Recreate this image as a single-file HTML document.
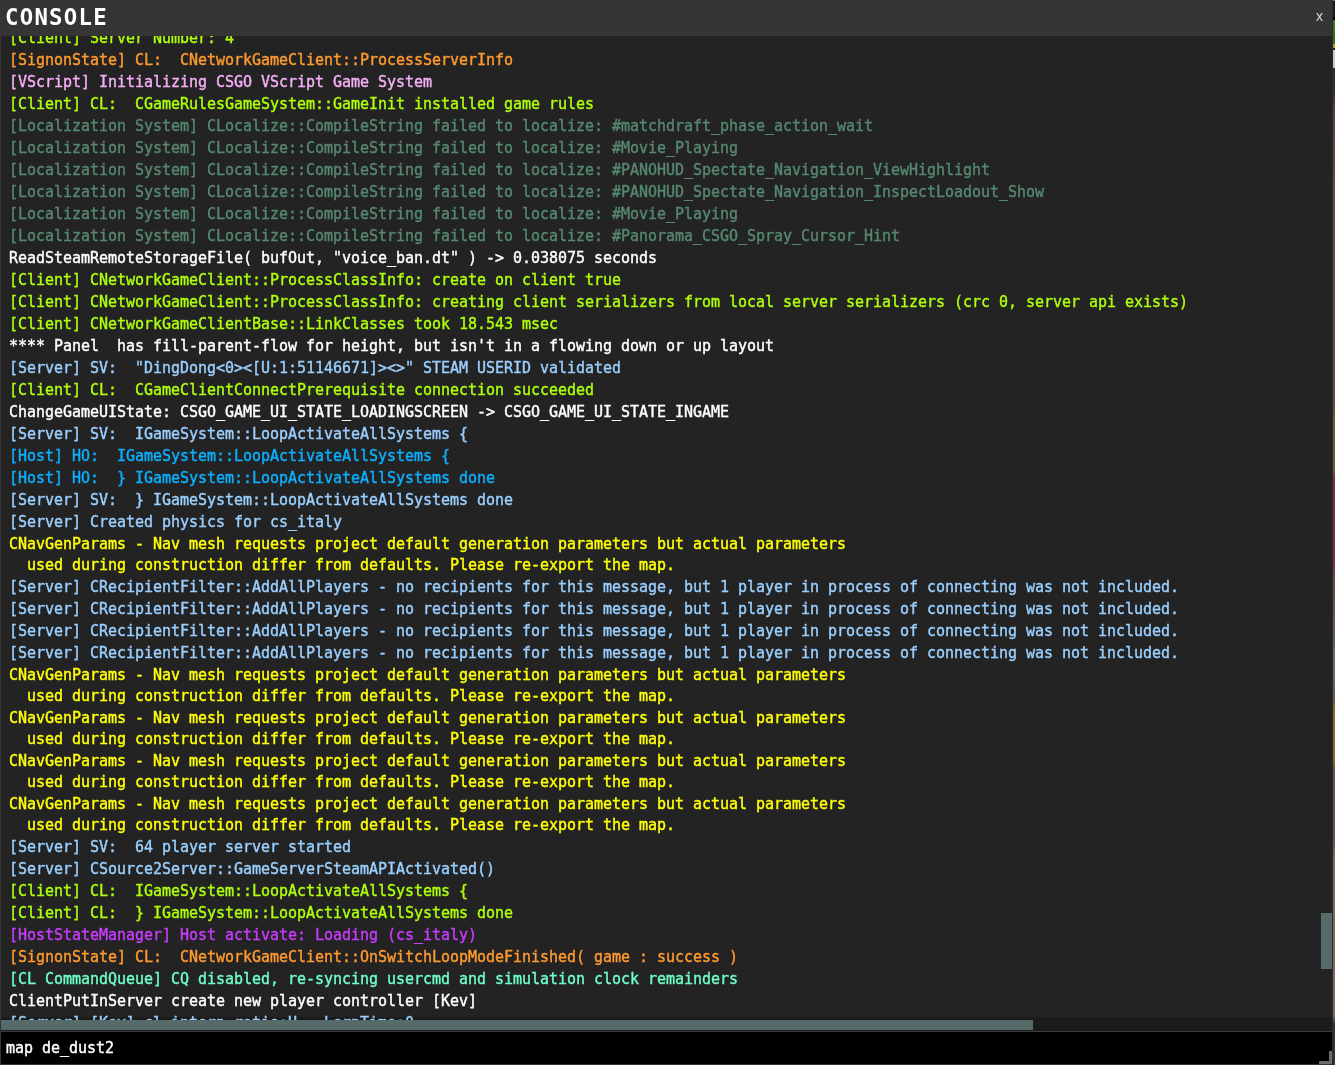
<!DOCTYPE html>
<html lang="en">
<head>
<meta charset="utf-8">
<title>Console</title>
<style>
html,body{margin:0;padding:0;}
body{width:1335px;height:1065px;overflow:hidden;position:relative;background:#5a4038;font-family:"DejaVu Sans Mono","Liberation Mono",monospace;}
.bg{position:absolute;left:1333px;top:0;width:2px;height:1065px;background:linear-gradient(to bottom,#4a9a2a 0,#4a9a2a 1px,#000 1px,#000 2px,#1c1c1c 2px,#1c1c1c 17px,#000 17px,#000 20px,#3a7a1e 20px,#2f6a1a 44px,#b0a020 44px,#b0a020 48px,#222 48px,#222 50px,#c8c8c8 50px,#c8c8c8 68px,#3a2a28 68px,#3a2a28 90px,#5a4038 110px,#6a4a3c 200px,#6a4a3c 400px,#6a5a30 420px,#6a5a30 470px,#7a3038 480px,#7a3038 560px,#6a4a40 580px,#6a5a50 640px,#6a6a70 660px,#6a5a50 700px,#8a6a20 710px,#8a6a20 760px,#6a5048 770px,#6a5048 840px,#80685a 860px,#80685a 1016px,#303040 1024px,#303040 1065px);}
.win{position:absolute;left:0;top:0;width:1332px;height:1065px;background:#353535;overflow:hidden;border-right:1px solid #2c2b2e;}
.hdr{position:absolute;left:0;top:0;width:1333px;height:36px;background:#353535;}
.title{position:absolute;left:5.4px;top:3px;will-change:transform;font-family:"DejaVu Sans Mono","Liberation Mono",monospace;font-weight:bold;font-size:22.3px;line-height:28px;letter-spacing:1.28px;color:#fff;white-space:nowrap;}
.close{will-change:transform;position:absolute;left:1316px;top:6px;font-family:"Liberation Sans",sans-serif;font-size:14px;line-height:20px;color:#dcdcdc;}
.log{position:absolute;left:1px;top:36px;width:1331px;height:995px;background:#232323;overflow:hidden;}
.inner{will-change:transform;position:absolute;left:8.3px;top:-7.9px;-webkit-text-stroke:0.4px currentColor;font-size:15px;letter-spacing:-0.031px;}
.clip{position:absolute;left:0;top:0;width:1331px;height:984px;overflow:hidden;}
.l{line-height:21px;margin-bottom:1px;white-space:pre;}
.cl{color:#aeff0c}.so{color:#ff9a2f}.vs{color:#f6aff6}.lo{color:#568870}.df{color:#fff}
.sv{color:#9acfff}.ho{color:#0cb0ff}.nv{color:#ffff0a}.hs{color:#c83cff}.cq{color:#6dffc8}
.htrack{position:absolute;left:0;top:981px;width:1331px;height:14px;background:rgba(20,20,20,.5);}
.hthumb{position:absolute;left:0;top:984px;width:1032px;height:10px;background:#566a69;}
.vthumb{position:absolute;left:1320px;top:877px;width:11px;height:56px;background:#566a69;}
.sep{position:absolute;left:1px;top:1031px;width:1331px;height:1px;background:#3c3c3c;}
.inp{position:absolute;left:1px;top:1032px;width:1331px;height:32px;background:#000;color:#fff;font-size:15px;letter-spacing:-0.031px;white-space:pre;}
.inp span{position:absolute;left:5px;top:6px;line-height:21px;will-change:transform;-webkit-text-stroke:0.4px currentColor;}
.grip{position:absolute;left:1319px;top:1051px;width:13px;height:13px;box-sizing:border-box;border-right:3px solid #6b6b6b;border-bottom:3px solid #6b6b6b;}
</style>
</head>
<body>
<div class="bg"></div>
<div class="win">
<div class="hdr"><div class="title">CONSOLE</div><div class="close">x</div></div>
<div class="log">
<div class="htrack"></div>
<div class="clip"><div class="inner">
<div class="l cl">[Client] Server Number: 4</div>
<div class="l so">[SignonState] CL:  CNetworkGameClient::ProcessServerInfo</div>
<div class="l vs">[VScript] Initializing CSGO VScript Game System</div>
<div class="l cl">[Client] CL:  CGameRulesGameSystem::GameInit installed game rules</div>
<div class="l lo">[Localization System] CLocalize::CompileString failed to localize: #matchdraft_phase_action_wait</div>
<div class="l lo">[Localization System] CLocalize::CompileString failed to localize: #Movie_Playing</div>
<div class="l lo">[Localization System] CLocalize::CompileString failed to localize: #PANOHUD_Spectate_Navigation_ViewHighlight</div>
<div class="l lo">[Localization System] CLocalize::CompileString failed to localize: #PANOHUD_Spectate_Navigation_InspectLoadout_Show</div>
<div class="l lo">[Localization System] CLocalize::CompileString failed to localize: #Movie_Playing</div>
<div class="l lo">[Localization System] CLocalize::CompileString failed to localize: #Panorama_CSGO_Spray_Cursor_Hint</div>
<div class="l df">ReadSteamRemoteStorageFile( bufOut, "voice_ban.dt" ) -&gt; 0.038075 seconds</div>
<div class="l cl">[Client] CNetworkGameClient::ProcessClassInfo: create on client true</div>
<div class="l cl">[Client] CNetworkGameClient::ProcessClassInfo: creating client serializers from local server serializers (crc 0, server api exists)</div>
<div class="l cl">[Client] CNetworkGameClientBase::LinkClasses took 18.543 msec</div>
<div class="l df">**** Panel  has fill-parent-flow for height, but isn't in a flowing down or up layout</div>
<div class="l sv">[Server] SV:  "DingDong&lt;0&gt;&lt;[U:1:51146671]&gt;&lt;&gt;" STEAM USERID validated</div>
<div class="l cl">[Client] CL:  CGameClientConnectPrerequisite connection succeeded</div>
<div class="l df">ChangeGameUIState: CSGO_GAME_UI_STATE_LOADINGSCREEN -&gt; CSGO_GAME_UI_STATE_INGAME</div>
<div class="l sv">[Server] SV:  IGameSystem::LoopActivateAllSystems {</div>
<div class="l ho">[Host] HO:  IGameSystem::LoopActivateAllSystems {</div>
<div class="l ho">[Host] HO:  } IGameSystem::LoopActivateAllSystems done</div>
<div class="l sv">[Server] SV:  } IGameSystem::LoopActivateAllSystems done</div>
<div class="l sv">[Server] Created physics for cs_italy</div>
<div class="l nv">CNavGenParams - Nav mesh requests project default generation parameters but actual parameters
  used during construction differ from defaults. Please re-export the map.</div>
<div class="l sv">[Server] CRecipientFilter::AddAllPlayers - no recipients for this message, but 1 player in process of connecting was not included.</div>
<div class="l sv">[Server] CRecipientFilter::AddAllPlayers - no recipients for this message, but 1 player in process of connecting was not included.</div>
<div class="l sv">[Server] CRecipientFilter::AddAllPlayers - no recipients for this message, but 1 player in process of connecting was not included.</div>
<div class="l sv">[Server] CRecipientFilter::AddAllPlayers - no recipients for this message, but 1 player in process of connecting was not included.</div>
<div class="l nv">CNavGenParams - Nav mesh requests project default generation parameters but actual parameters
  used during construction differ from defaults. Please re-export the map.</div>
<div class="l nv">CNavGenParams - Nav mesh requests project default generation parameters but actual parameters
  used during construction differ from defaults. Please re-export the map.</div>
<div class="l nv">CNavGenParams - Nav mesh requests project default generation parameters but actual parameters
  used during construction differ from defaults. Please re-export the map.</div>
<div class="l nv">CNavGenParams - Nav mesh requests project default generation parameters but actual parameters
  used during construction differ from defaults. Please re-export the map.</div>
<div class="l sv">[Server] SV:  64 player server started</div>
<div class="l sv">[Server] CSource2Server::GameServerSteamAPIActivated()</div>
<div class="l cl">[Client] CL:  IGameSystem::LoopActivateAllSystems {</div>
<div class="l cl">[Client] CL:  } IGameSystem::LoopActivateAllSystems done</div>
<div class="l hs">[HostStateManager] Host activate: Loading (cs_italy)</div>
<div class="l so">[SignonState] CL:  CNetworkGameClient::OnSwitchLoopModeFinished( game : success )</div>
<div class="l cq">[CL CommandQueue] CQ disabled, re-syncing usercmd and simulation clock remainders</div>
<div class="l df">ClientPutInServer create new player controller [Kev]</div>
<div class="l sv">[Server] [Kev] cl_interp_ratio:H,  LerpTime:0</div>
</div></div>
<div class="hthumb"></div>
<div class="vthumb"></div>
</div>
<div class="sep"></div>
<div class="inp"><span>map de_dust2</span></div>
<div class="grip"></div>
</div>
</body>
</html>
